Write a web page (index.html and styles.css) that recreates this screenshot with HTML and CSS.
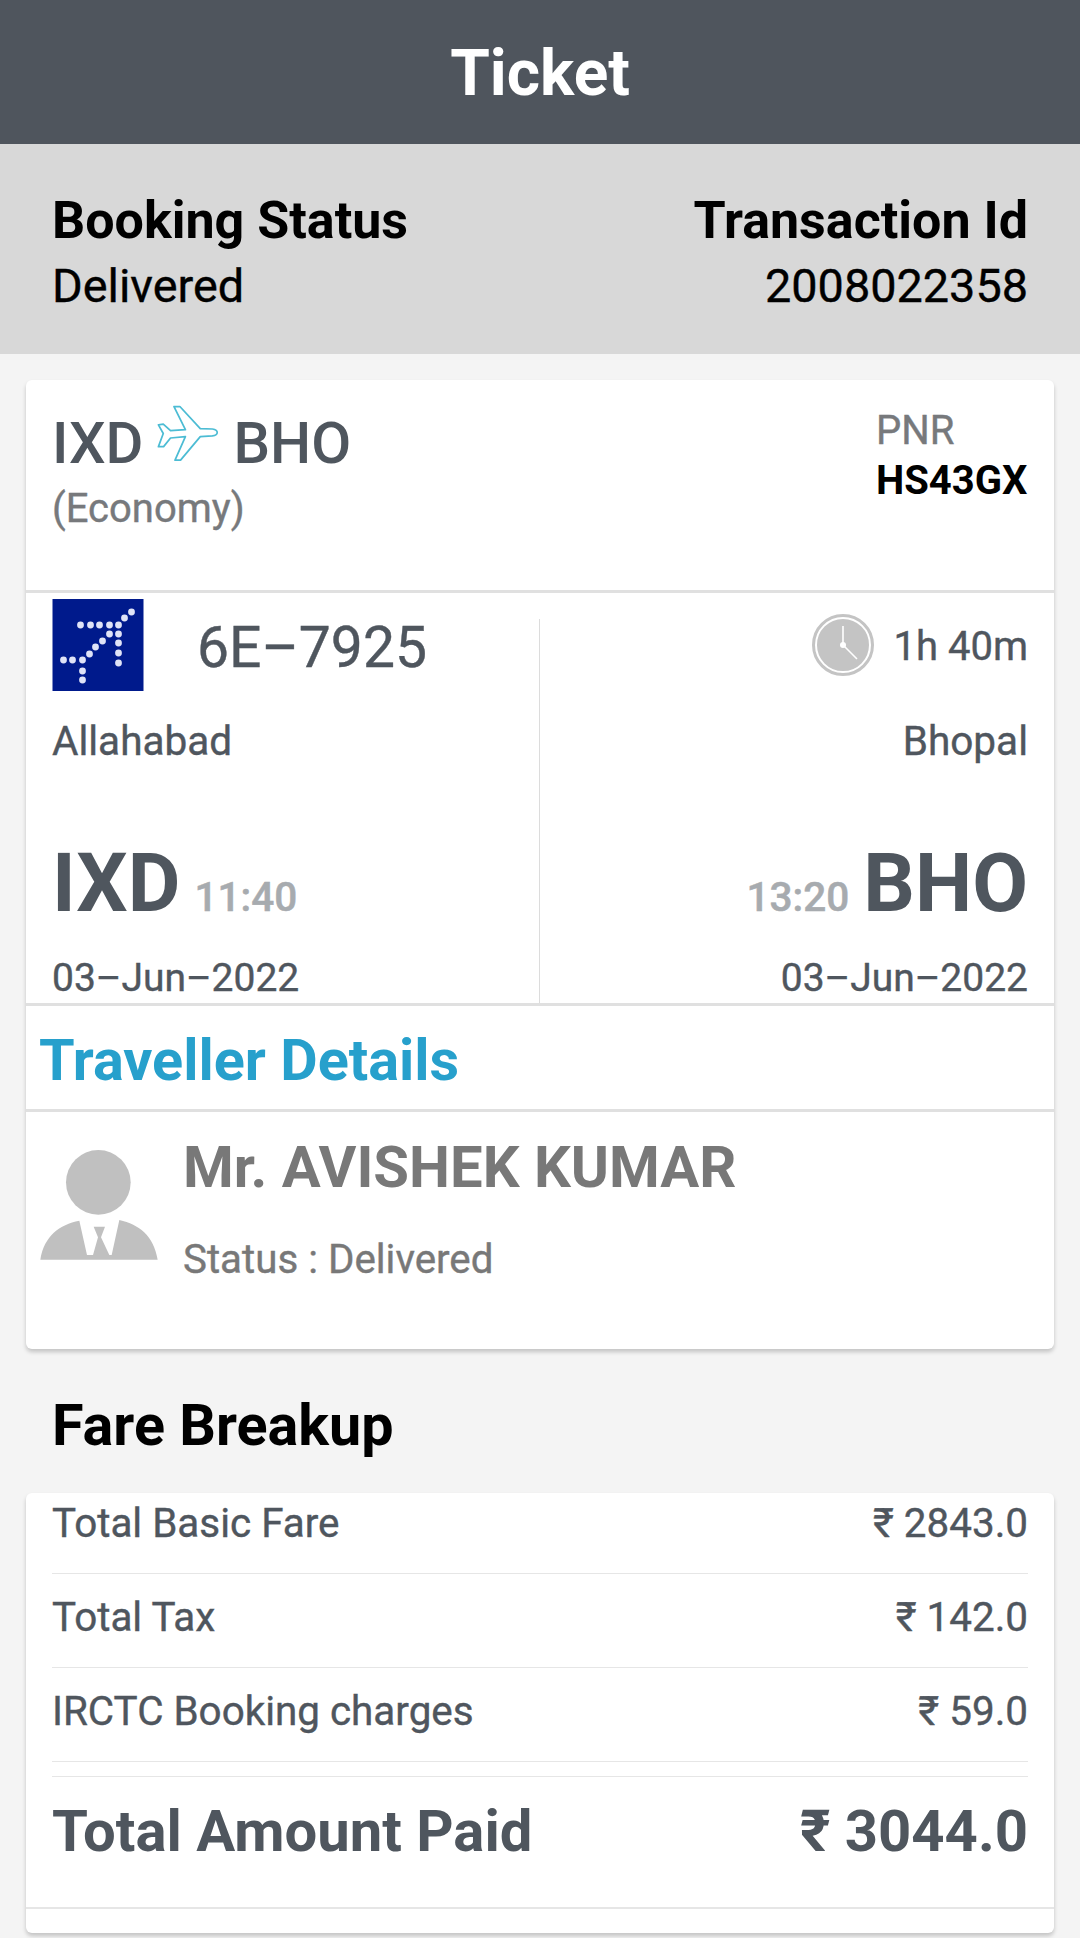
FILE: index.html
```html
<!DOCTYPE html>
<html lang="en">
<head>
    <meta charset="UTF-8">
    <meta name="viewport" content="width=device-width, initial-scale=1.0">
    <title>Ticket</title>
    <link rel="stylesheet" href="styles.css">
</head>

<body>

    <div class="header">Ticket</div>

    <div class="status-band">
        <div>
            <div class="band-title">Booking Status</div>
            <div class="band-value">Delivered</div>
        </div>
        <div class="align-right">
            <div class="band-title">Transaction Id</div>
            <div class="band-value">2008022358</div>
        </div>
    </div>

    <div class="card ticket-card">
        <div class="route-section">
            <div>
                <div class="route">
                    <span>IXD</span>
                    <svg class="plane-icon" viewBox="455 135 185 170">
                        <path d="M507 142 L524 142 L583 206 L618 207 Q632 209 632 217 Q632 225 618 227 L583 229 L526 297 L510 297 L540 229 L497 233 L477 258 L462 258 L476 220 L462 195 L476 193 L497 212 L540 209 Z" fill="none" stroke="#4cbcd4" stroke-width="5" stroke-linejoin="round"/>
                    </svg>
                    <span>BHO</span>
                </div>
                <div class="cabin">(Economy)</div>
            </div>
            <div class="pnr">
                <div class="pnr-label">PNR</div>
                <div class="pnr-value">HS43GX</div>
            </div>
        </div>

        <div class="flight-section">
            <div class="flight-col col-left">
                <div class="flight-top">
                    <svg class="airline-logo" viewBox="0 0 91 92">
                        <rect width="91" height="92" fill="#001a8c"/>
                        <g class="logo-dots" fill="#dfe3f7">
                            <circle cx="79" cy="13" r="3.4"/><circle cx="72" cy="19" r="3.4"/>
                            <circle cx="28" cy="26" r="3.4"/><circle cx="38" cy="26" r="3.4"/><circle cx="47" cy="26" r="3.4"/><circle cx="57" cy="26" r="3.4"/><circle cx="66" cy="26" r="3.4"/>
                            <circle cx="57" cy="35" r="3.4"/><circle cx="66" cy="35" r="3.4"/><circle cx="66" cy="44" r="3.4"/><circle cx="66" cy="54" r="3.4"/><circle cx="66" cy="64" r="3.4"/>
                            <circle cx="50" cy="42" r="3.4"/><circle cx="43" cy="48" r="3.4"/><circle cx="37" cy="55" r="3.4"/>
                            <circle cx="11" cy="61" r="3.4"/><circle cx="20" cy="61" r="3.4"/><circle cx="30" cy="61" r="3.4"/>
                            <circle cx="30" cy="72" r="3.4"/><circle cx="30" cy="81" r="3.4"/>
                        </g>
                    </svg>
                    <span class="flight-no">6E–7925</span>
                </div>
                <div class="city">Allahabad</div>
                <div class="code-row">
                    <span class="code">IXD</span>
                    <span class="time">11:40</span>
                </div>
                <div class="date">03–Jun–2022</div>
            </div>
            <div class="flight-col col-right">
                <div class="flight-top justify-end">
                    <svg class="clock-icon" viewBox="0 0 62 62">
                        <circle cx="31" cy="31" r="30" fill="#c4c4c4" stroke="#c4c4c4" stroke-width="2"/>
                        <circle cx="31" cy="31" r="27" fill="none" stroke="#fff" stroke-width="2"/>
                        <path d="M31 12 L31 31 L45 45" fill="none" stroke="#fff" stroke-width="1.6"/>
                        <circle cx="31" cy="31" r="3" fill="#fff"/>
                    </svg>
                    <span class="duration">1h 40m</span>
                </div>
                <div class="city align-right">Bhopal</div>
                <div class="code-row justify-end">
                    <span class="time">13:20</span>
                    <span class="code">BHO</span>
                </div>
                <div class="date align-right">03–Jun–2022</div>
            </div>
        </div>

        <div class="section-title">Traveller Details</div>

        <div class="traveller">
            <svg class="person-icon" viewBox="118 178 352 330">
                <circle cx="292" cy="275" r="97" fill="#c0c0c0"/>
                <path d="M118 507 C130 435 175 402 235 390 L258 493 L276 493 L291 440 L278 408 L312 408 L300 440 L325 493 L332 493 L355 388 C415 402 458 435 470 507 Z" fill="#c0c0c0"/>
            </svg>
            <div>
                <div class="traveller-name">Mr. AVISHEK KUMAR</div>
                <div class="traveller-status">Status : Delivered</div>
            </div>
        </div>
    </div>

    <div class="fare-title">Fare Breakup</div>

    <div class="card fare-card">
        <div class="fare-rows">
            <div class="fare-row"><span>Total Basic Fare</span><span>₹ 2843.0</span></div>
            <div class="fare-row"><span>Total Tax</span><span>₹ 142.0</span></div>
            <div class="fare-row"><span>IRCTC Booking charges</span><span>₹ 59.0</span></div>
        </div>
        <div class="fare-total-wrap">
            <div class="fare-total"><span>Total Amount Paid</span><span>₹ 3044.0</span></div>
        </div>
    </div>

</body>

</html>
```

FILE: styles.css
```css
body {
    font-family: Roboto, "Noto Sans", sans-serif;
    margin: 0;
    height: 1938px;
    overflow: hidden;
    background-color: #f4f4f4;
    color: #4f565e;
}

.align-right {
    text-align: right;
}

.justify-end {
    justify-content: flex-end;
}

/* the reference text sits between regular and medium */
.band-value,
.cabin,
.pnr-label,
.flight-no,
.duration,
.city,
.date,
.traveller-status,
.fare-row {
    -webkit-text-stroke: 0.4px;
}

.header {
    height: 144px;
    line-height: 148px;
    text-align: center;
    background-color: #4f555d;
    color: white;
    font-size: 64px;
    font-weight: 700;
}

.status-band {
    display: flex;
    justify-content: space-between;
    height: 210px;
    box-sizing: border-box;
    padding: 47px 52px 0;
    background-color: #d8d8d8;
    color: black;
}

.band-title {
    font-size: 52px;
    font-weight: 700;
    line-height: 60px;
}

.band-value {
    font-size: 46.8px;
    line-height: 70px;
}

.card {
    display: flow-root;
    margin: 0 26px;
    background-color: white;
    border-radius: 6px;
    box-shadow: 0 3px 4px rgba(0, 0, 0, 0.2);
}

.ticket-card {
    margin-top: 26px;
    height: 969px;
}

.route-section {
    display: flex;
    justify-content: space-between;
    height: 213px;
    box-sizing: border-box;
    padding: 28px 26px 0;
    border-bottom: 3px solid #e0e0e0;
}

.route {
    display: flex;
    align-items: center;
    font-size: 58px;
    font-weight: 500;
    line-height: 70px;
}

.plane-icon {
    width: 64px;
    height: 59px;
    margin: -20px 13px 0 13px;
}

.cabin {
    font-size: 40px;
    line-height: 62px;
    color: #77797c;
}

.pnr {
    width: 152px;
    padding-top: 1px;
}

.pnr-label {
    font-size: 40px;
    line-height: 44px;
    color: #77797c;
}

.pnr-value {
    font-size: 40px;
    font-weight: 700;
    line-height: 56px;
    color: black;
}

.flight-section {
    display: flex;
    height: 410px;
    border-bottom: 3px solid #e0e0e0;
}

.flight-col {
    flex: 1;
    box-sizing: border-box;
    padding: 6px 26px 0;
}

.col-right {
    position: relative;
}

.col-right::before {
    content: "";
    position: absolute;
    left: -1px;
    top: 26px;
    bottom: 0;
    width: 1px;
    background-color: #dcdcdc;
}

.flight-top {
    display: flex;
    align-items: center;
    height: 92px;
}

.airline-logo {
    width: 92px;
    height: 92px;
}

.logo-dots {
    filter: blur(0.7px);
}

.flight-no {
    margin-left: 53px;
    padding-top: 5px;
    font-size: 57px;
}

.clock-icon {
    width: 62px;
    height: 62px;
    margin-right: 20px;
}

.duration {
    padding-top: 2px;
    font-size: 40px;
}

.city {
    margin-top: 25px;
    font-size: 40.5px;
    line-height: 50px;
}

.code-row {
    display: flex;
    align-items: baseline;
    margin-top: 73px;
    line-height: 90px;
}

.code {
    font-size: 81px;
    font-weight: 700;
}

.time {
    margin: 0 14px 0 14px;
    font-size: 40.5px;
    font-weight: 500;
    color: #a7abaf;
    -webkit-text-stroke: 0.5px;
}

.col-right .time {
    margin: 0 14px 0 0;
}

.date {
    margin-top: 11px;
    font-size: 39px;
    line-height: 50px;
}

.section-title {
    height: 103px;
    line-height: 110px;
    padding-left: 13px;
    border-bottom: 3px solid #e0e0e0;
    font-size: 57.6px;
    font-weight: 700;
    color: #27a0cc;
}

.traveller {
    display: flex;
    padding: 20px 14px 0;
}

.person-icon {
    width: 118px;
    height: 110px;
    margin-top: 18px;
    margin-right: 25px;
}

.traveller-name {
    font-size: 58px;
    font-weight: 700;
    line-height: 70px;
    color: #787878;
}

.traveller-status {
    margin-top: 33px;
    font-size: 40.3px;
    line-height: 50px;
    color: #787878;
}

.fare-title {
    height: 144px;
    line-height: 154px;
    padding-left: 52px;
    font-size: 57.5px;
    font-weight: 700;
    color: black;
}

.fare-card {
    height: 440px;
}

.fare-rows {
    margin-top: -13px;
    padding: 0 26px;
}

.fare-row {
    display: flex;
    justify-content: space-between;
    height: 93px;
    line-height: 88px;
    font-size: 40.4px;
    border-bottom: 1px solid #e6e6e6;
}

.fare-total-wrap {
    height: 131px;
    margin-top: 14px;
    padding: 0 26px;
    border-bottom: 2px solid #e6e6e6;
}

.fare-total {
    display: flex;
    justify-content: space-between;
    align-items: center;
    height: 108px;
    border-top: 1px solid #e6e6e6;
    font-size: 58px;
    font-weight: 700;
}
```
